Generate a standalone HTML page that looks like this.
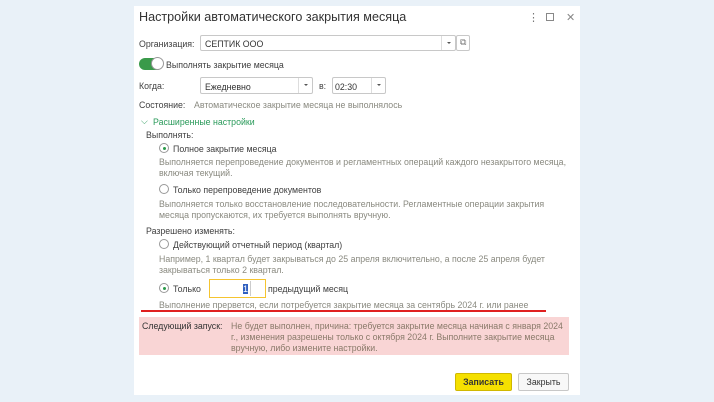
<!DOCTYPE html>
<html><head><meta charset="utf-8"><style>
*{margin:0;padding:0;box-sizing:border-box}
body{width:714px;height:402px;background:#e9f1f8;font-family:"Liberation Sans",sans-serif;font-size:8.8px;color:#404040;position:relative;overflow:hidden}
.dlg{position:absolute;left:134px;top:6px;width:446px;height:389px;background:#fff}
.a{position:absolute;white-space:nowrap}
.g{color:#8a8a80}
.fld{position:absolute;border:1px solid #c8c8c8;background:#fff;border-radius:2px}
.rb{position:absolute;width:10px;height:10px;border:1px solid #999;border-radius:50%;background:#fff}
.rb.on::after{content:"";position:absolute;left:2.5px;top:2.5px;width:3px;height:3px;border-radius:50%;background:#2a9a4a}
.dd{position:absolute;top:0;bottom:0;width:14px;border-left:1px solid #ddd}
.dd::after{content:"";position:absolute;left:5px;top:6px;border:2px solid transparent;border-top:2.5px solid #555}
</style></head><body>
<div class="dlg"></div>
<div class="a" style="left:139px;top:10px;font-size:12.6px;color:#333">Настройки автоматического закрытия месяца</div>
<div class="a" style="left:528px;top:11px;font-size:11px;color:#777">⋮</div>
<div class="a" style="left:546px;top:13px;width:8px;height:8px;border:1px solid #888"></div>
<div class="a" style="left:566px;top:11px;font-size:11px;color:#888">✕</div>

<div class="a" style="left:139px;top:39px">Организация:</div>
<div class="fld" style="left:200px;top:35px;width:256px;height:16px"><div class="a" style="left:4px;top:3px;color:#333">СЕПТИК ООО</div><div class="dd" style="right:0"></div></div>
<div class="fld" style="left:456px;top:35px;width:14px;height:16px"><div class="a" style="left:3px;top:1px;font-size:9px;color:#777">⧉</div></div>

<div class="a" style="left:139px;top:58px;width:24px;height:12px;border-radius:6px;background:#3a9a4a"></div>
<div class="a" style="left:151px;top:57px;width:13px;height:13px;border-radius:50%;background:#fff;border:1px solid #999"></div>
<div class="a" style="left:166px;top:60px">Выполнять закрытие месяца</div>

<div class="a" style="left:139px;top:81px">Когда:</div>
<div class="fld" style="left:200px;top:77px;width:113px;height:17px"><div class="a" style="left:4px;top:4px;color:#333">Ежедневно</div><div class="dd" style="right:0"></div></div>
<div class="a" style="left:319px;top:81px">в:</div>
<div class="fld" style="left:332px;top:77px;width:54px;height:17px"><div class="a" style="left:2px;top:4px;color:#333">02:30</div><div class="dd" style="right:0"></div></div>

<div class="a" style="left:139px;top:100px">Состояние:</div>
<div class="a g" style="left:194px;top:100px">Автоматическое закрытие месяца не выполнялось</div>

<div class="a" style="left:141px;top:116px;color:#2a9a5a">⌵</div>
<div class="a" style="left:153px;top:117px;color:#2a9a5a">Расширенные настройки</div>

<div class="a" style="left:146px;top:130px">Выполнять:</div>
<div class="rb on" style="left:159px;top:143px"></div>
<div class="a" style="left:173px;top:144px">Полное закрытие месяца</div>
<div class="a g" style="left:159px;top:157px;line-height:11px">Выполняется перепроведение документов и регламентных операций каждого незакрытого месяца,<br>включая текущий.</div>
<div class="rb" style="left:159px;top:184px"></div>
<div class="a" style="left:173px;top:185px">Только перепроведение документов</div>
<div class="a g" style="left:159px;top:199px;line-height:11px">Выполняется только восстановление последовательности. Регламентные операции закрытия<br>месяца пропускаются, их требуется выполнять вручную.</div>

<div class="a" style="left:146px;top:226px">Разрешено изменять:</div>
<div class="rb" style="left:159px;top:239px"></div>
<div class="a" style="left:173px;top:240px">Действующий отчетный период (квартал)</div>
<div class="a g" style="left:159px;top:254px;line-height:11px">Например, 1 квартал будет закрываться до 25 апреля включительно, а после 25 апреля будет<br>закрываться только 2 квартал.</div>

<div class="rb on" style="left:159px;top:283px"></div>
<div class="a" style="left:173px;top:284px">Только</div>
<div class="a" style="left:209px;top:279px;width:57px;height:19px;border:1.5px solid #f5c430;background:#fff"></div>
<div class="a" style="left:243px;top:284px;width:5px;height:10px;background:#3060c0;color:#fff;font-size:9px;line-height:10px">1</div>
<div class="a" style="left:250px;top:281px;width:1px;height:15px;background:#ccc"></div>
<div class="a" style="left:268px;top:284px">предыдущий месяц</div>

<div class="a g" style="left:159px;top:300px">Выполнение прервется, если потребуется закрытие месяца за сентябрь 2024 г. или ранее</div>
<div class="a" style="left:141px;top:310px;width:405px;height:1.5px;background:#e02020"></div>

<div class="a" style="left:139px;top:317px;width:430px;height:38px;background:#f9d5d5"></div>
<div class="a" style="left:142px;top:321px;color:#333">Следующий запуск:</div>
<div class="a g" style="left:231px;top:321px;line-height:11px;color:#8a7a6a">Не будет выполнен, причина: требуется закрытие месяца начиная с января 2024<br>г., изменения разрешены только с октября 2024 г. Выполните закрытие месяца<br>вручную, либо измените настройки.</div>

<div class="a" style="left:455px;top:373px;width:57px;height:18px;background:#f5e000;border:1px solid #d0b800;border-radius:2px;text-align:center;line-height:16px;font-weight:bold;color:#333">Записать</div>
<div class="a" style="left:518px;top:373px;width:51px;height:18px;background:#f8f8f8;border:1px solid #c8c8c8;border-radius:2px;text-align:center;line-height:16px;color:#333">Закрыть</div>
</body></html>
